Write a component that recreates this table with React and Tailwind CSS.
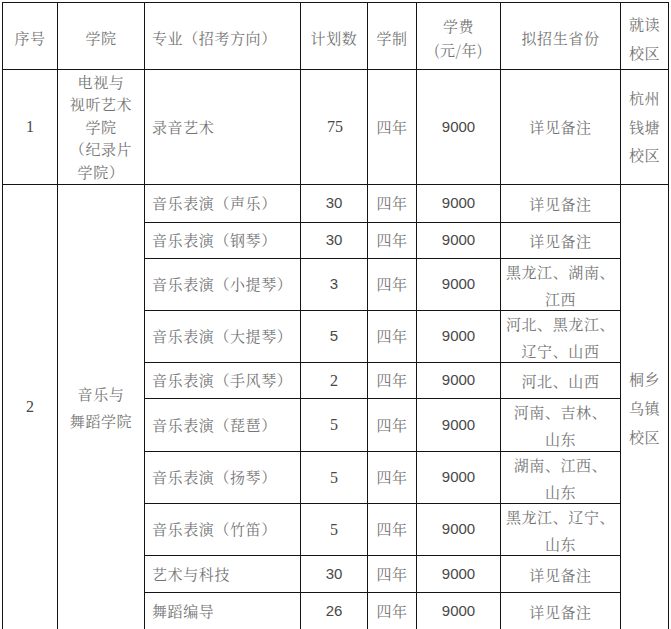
import React from "react";

const cjk = "font-['Noto_Serif_CJK_SC','Noto_Sans_CJK_SC',serif] text-[15px] tracking-[0.6px] text-[#747474]";
const sansNum = "font-['Liberation_Sans',sans-serif] text-[15px] text-[#484848]";
const serifNum = "font-['Liberation_Serif',serif] text-[16px] text-[#484848]";

const C = ({ children, className = "" }) => (
  <div className={`bg-white flex items-center justify-center text-center ${className}`}>{children}</div>
);

const L = ({ children, className = "" }) => (
  <div className={`bg-white flex items-center justify-start pl-[7px] ${cjk} ${className}`}>{children}</div>
);

const rows = [
  { major: "音乐表演（声乐）", n: "30", ns: false, prov: ["详见备注"] },
  { major: "音乐表演（钢琴）", n: "30", ns: false, prov: ["详见备注"] },
  { major: "音乐表演（小提琴）", n: "3", ns: false, prov: ["黑龙江、湖南、", "江西"] },
  { major: "音乐表演（大提琴）", n: "5", ns: false, prov: ["河北、黑龙江、", "辽宁、山西"] },
  { major: "音乐表演（手风琴）", n: "2", ns: true, prov: ["河北、山西"] },
  { major: "音乐表演（琵琶）", n: "5", ns: true, prov: ["河南、吉林、", "山东"] },
  { major: "音乐表演（扬琴）", n: "5", ns: true, prov: ["湖南、江西、", "山东"] },
  { major: "音乐表演（竹笛）", n: "5", ns: true, prov: ["黑龙江、辽宁、", "山东"] },
  { major: "艺术与科技", n: "30", ns: false, prov: ["详见备注"] },
  { major: "舞蹈编导", n: "26", ns: false, prov: ["详见备注"] },
];

export default function App() {
  return (
    <div className="bg-white w-[671px] h-[629px] overflow-hidden pl-[2px] pt-[2px]">
      <div className="grid w-fit gap-px bg-[#141414] p-px grid-cols-[54px_86px_155px_66px_48px_83px_119px_47px] grid-rows-[66px_114px_37px_35px_51px_51px_35px_52px_51px_51px_36px_36px]">
        {/* header */}
        <C className={`${cjk} pt-[4px]`}>序号</C>
        <C className={`${cjk} pt-[4px]`}>学院</C>
        <L className="pt-[4px]">专业（招考方向）</L>
        <C className={`${cjk} pt-[4px]`}>计划数</C>
        <C className={`${cjk} pt-[4px]`}>学制</C>
        <C className={`${cjk} leading-[24px] pt-[4px]`}>
          <span>学费<br />(元/年)</span>
        </C>
        <C className={`${cjk} pt-[4px]`}>拟招生省份</C>
        <C className={`${cjk} leading-[29px] pt-[4px]`}>
          <span>就读<br />校区</span>
        </C>

        {/* row 1 */}
        <C className={serifNum}>1</C>
        <C className={`${cjk} leading-[22.5px]`}>
          <span>电视与<br />视听艺术<br />学院<br />（纪录片<br />学院）</span>
        </C>
        <L className="pl-[5px]">录音艺术</L>
        <C className={`${serifNum} pl-[2px]`}>75</C>
        <C className={cjk}>四年</C>
        <C className={sansNum}>9000</C>
        <C className={cjk}>详见备注</C>
        <C className={`${cjk} leading-[28.5px]`}>
          <span>杭州<br />钱塘<br />校区</span>
        </C>

        {/* row 2 */}
        <C className={`${serifNum} row-span-10`}>2</C>
        <C className={`${cjk} row-span-10 leading-[27px]`}>
          <span>音乐与<br />舞蹈学院</span>
        </C>
        {rows.map((r, i) => (
          <React.Fragment key={i}>
            <L>{r.major}</L>
            <C className={r.ns ? serifNum : sansNum}>{r.n}</C>
            <C className={cjk}>四年</C>
            <C className={sansNum}>9000</C>
            <C className={`${cjk} leading-[27px]`}>
              <span>
                {r.prov.map((p, j) => (
                  <React.Fragment key={j}>
                    {j > 0 && <br />}
                    {p}
                  </React.Fragment>
                ))}
              </span>
            </C>
            {i === 0 && (
              <C className={`${cjk} row-span-10 leading-[29px]`}>
                <span>桐乡<br />乌镇<br />校区</span>
              </C>
            )}
          </React.Fragment>
        ))}
      </div>
    </div>
  );
}
